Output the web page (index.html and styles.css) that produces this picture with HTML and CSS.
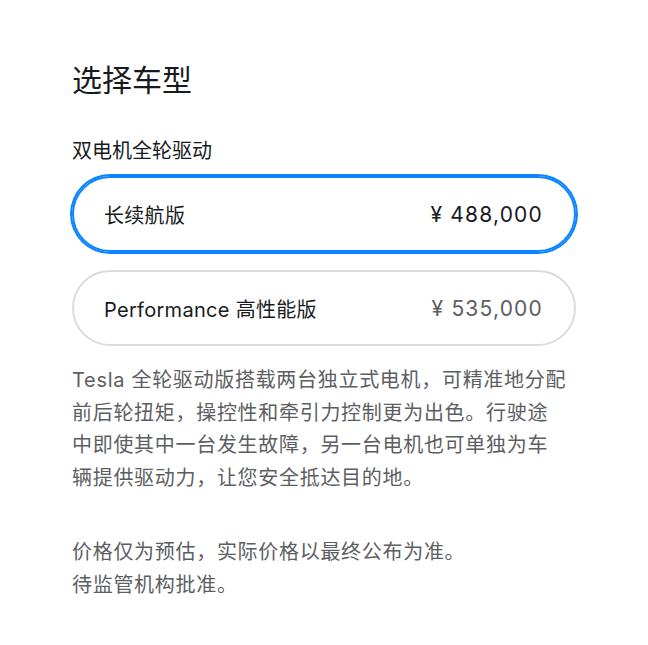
FILE: index.html
```html
<!DOCTYPE html>
<html lang="zh-CN">

<head>
    <meta charset="UTF-8">
    <meta name="viewport" content="width=device-width, initial-scale=1.0">
    <title>选择车型</title>
    <link rel="stylesheet" href="styles.css">
</head>

<body>
    <div class="container">
        <h1 class="title">选择车型</h1>
        <h2 class="group-title">双电机全轮驱动</h2>

        <div class="options">
            <label class="option selected">
                <span class="option-name">长续航版</span>
                <span class="option-price">¥ 488,000</span>
            </label>
            <label class="option">
                <span class="option-name">Performance 高性能版</span>
                <span class="option-price">¥ 535,000</span>
            </label>
        </div>

        <p class="description">
            Tesla 全轮驱动版搭载两台独立式电机，可精准地分配<br>
            前后轮扭矩，操控性和牵引力控制更为出色。行驶途<br>
            中即使其中一台发生故障，另一台电机也可单独为车<br>
            辆提供驱动力，让您安全抵达目的地。
        </p>
        <p class="note">
            价格仅为预估，实际价格以最终公布为准。<br>
            待监管机构批准。
        </p>
    </div>
</body>

</html>
```

FILE: styles.css
```css
body {
    font-family: Inter, "Noto Sans CJK SC", sans-serif;
    background-color: #fff;
    color: #171a20;
    margin: 0;
    padding: 0;
}

.container {
    width: 504px;
    margin: 0 auto;
    padding-top: 60px;
}

.title {
    font-size: 30px;
    font-weight: 400;
    line-height: 40px;
    margin: 0 0 35px;
}

.group-title {
    font-size: 20px;
    font-weight: 400;
    line-height: 32px;
    margin: 0 0 9px;
}

.options {
    display: flex;
    flex-direction: column;
    gap: 18px;
}

.option {
    display: flex;
    justify-content: space-between;
    align-items: center;
    height: 76px;
    padding: 0 31px 0 30px;
    border: 2px solid #dcdcdc;
    border-radius: 38px;
    box-sizing: border-box;
    font-size: 20px;
    cursor: pointer;
}

.option.selected {
    border-color: #0a84ff;
    box-shadow: 0 0 0 2px #0a84ff;
}

.option-name {
    letter-spacing: 0.3px;
}

.option-price {
    font-size: 21px;
    letter-spacing: 1.2px;
    color: #5c5e62;
}

.option.selected .option-price {
    color: #171a20;
}

.description,
.note {
    font-size: 20px;
    line-height: 32.5px;
    letter-spacing: 0.7px;
    color: #5c5e62;
    margin: 18px 0 0;
}

.note {
    margin-top: 42px;
}
```
